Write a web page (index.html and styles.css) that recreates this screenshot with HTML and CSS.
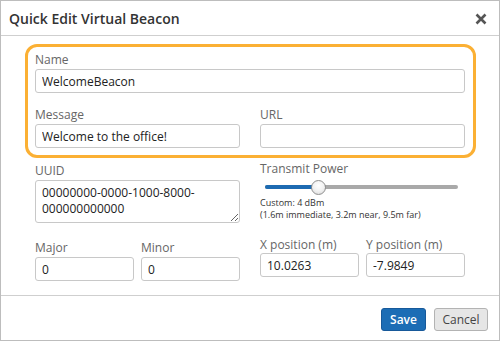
FILE: index.html
```html
<!DOCTYPE html>
<html>
<head>
<meta charset="utf-8">
<link rel="stylesheet" href="styles.css">
</head>
<body>
<div class="dialog">
  <div class="header">
    <div class="title">Quick Edit Virtual Beacon</div>
    <svg class="close" width="12" height="12" viewBox="0 0 12 12"><path d="M1.5 1.5 L10.5 10.5 M10.5 1.5 L1.5 10.5" stroke="#555" stroke-width="2.6" stroke-linecap="butt"/></svg>
  </div>
  <div class="body">
    <div class="highlight">
      <div class="field">
        <label class="label">Name</label>
        <input class="input" type="text" value="WelcomeBeacon">
      </div>
      <div class="row2">
        <div class="field">
          <label class="label">Message</label>
          <input class="input" type="text" value="Welcome to the office!">
        </div>
        <div class="field">
          <label class="label">URL</label>
          <input class="input" type="text" value="">
        </div>
      </div>
    </div>
    <div class="cols">
      <div class="col left">
        <label class="label">UUID</label>
        <textarea class="textarea">00000000-0000-1000-8000-000000000000</textarea>
        <div class="pair pair-left">
          <div class="field">
            <label class="label">Major</label>
            <input class="input small" type="text" value="0">
          </div>
          <div class="field">
            <label class="label">Minor</label>
            <input class="input small" type="text" value="0">
          </div>
        </div>
      </div>
      <div class="col right">
        <label class="label">Transmit Power</label>
        <div class="slider">
          <div class="track">
            <div class="fill"></div>
          </div>
          <div class="thumb"></div>
        </div>
        <div class="hint">Custom: 4 dBm<br>(1.6m immediate, 3.2m near, 9.5m far)</div>
        <div class="pair pair-right">
          <div class="field">
            <label class="label">X position (m)</label>
            <input class="input small" type="text" value="10.0263">
          </div>
          <div class="field">
            <label class="label">Y position (m)</label>
            <input class="input small" type="text" value="-7.9849">
          </div>
        </div>
      </div>
    </div>
  </div>
  <div class="footer">
    <button class="btn btn-primary">Save</button>
    <button class="btn btn-default">Cancel</button>
  </div>
</div>
</body>
</html>
```
FILE: styles.css
```css
* { box-sizing: border-box; }
html, body { margin: 0; padding: 0; background: #fff; }
body { font-family: "Open Sans", "Liberation Sans", sans-serif; color: #333; }

.dialog {
  width: 500px;
  height: 341px;
  border: 1px solid #bdbdbd;
  display: flex;
  flex-direction: column;
  background: #fff;
}

.header {
  height: 35px;
  border-bottom: 1px solid #cfcfcf;
  display: flex;
  align-items: center;
  justify-content: space-between;
  padding: 0 12px 0 8px;
  flex-shrink: 0;
}
.title {
  font-size: 14px;
  font-weight: 600;
  color: #333;
  margin-top: 1px;
}
.close { margin-top: 1px; }

.body {
  flex: 1;
  padding: 8px 23px 0 24px;
}

.highlight {
  border: 3px solid #fbb034;
  border-radius: 12px;
  padding: 5px 8px 7px 7px;
}

.field { display: flex; flex-direction: column; }

.label {
  display: block;
  font-size: 12px;
  line-height: 16px;
  color: #666;
  margin-bottom: 1px;
}

.input {
  height: 24px;
  border: 1px solid #c8c8c8;
  border-radius: 3px;
  padding: 0 6px;
  font-family: "Open Sans", "Liberation Sans", sans-serif;
  font-size: 12px;
  color: #222;
  background: #fff;
  width: 100%;
  outline: none;
}

.row2 {
  display: grid;
  grid-template-columns: 1fr 1fr;
  column-gap: 20px;
  margin-top: 14px;
}

.cols {
  display: grid;
  grid-template-columns: 205px 205px;
  column-gap: 20px;
  padding-left: 10px;
}

.col.left { padding-top: 5px; }
.col.right { padding-top: 3px; }

.textarea {
  display: block;
  width: 100%;
  height: 43px;
  border: 1px solid #c8c8c8;
  border-radius: 3px;
  padding: 4px 6px;
  font-family: "Open Sans", "Liberation Sans", sans-serif;
  font-size: 12px;
  line-height: 16px;
  color: #222;
  overflow: hidden;
  outline: none;
  margin: 0;
}

.pair {
  display: grid;
  grid-template-columns: 1fr 1fr;
  column-gap: 7px;
}
.pair-left { margin-top: 17px; }
.pair-right { margin-top: 16px; }
.pair-right .label { margin-bottom: 0; }
.small { height: 24px; }

.slider {
  position: relative;
  height: 19px;
  margin: 0 7px 0 5px;
}
.track {
  position: absolute;
  left: 0;
  right: 0;
  top: 7px;
  height: 4px;
  background: #a9a9a9;
  border-radius: 2px;
  overflow: hidden;
}
.fill {
  width: 53px;
  height: 100%;
  background: #1d6bb2;
}
.thumb {
  position: absolute;
  left: 46px;
  top: 2px;
  width: 15px;
  height: 15px;
  border-radius: 50%;
  border: 1px solid #8f8f8f;
  background: radial-gradient(circle at 50% 35%, #ffffff 0%, #f2f2f2 50%, #d6d6d6 100%);
}

.hint {
  font-size: 9px;
  line-height: 12px;
  color: #333;
}

.footer {
  height: 45px;
  border-top: 1px solid #cfcfcf;
  display: flex;
  justify-content: flex-end;
  align-items: flex-start;
  gap: 8px;
  padding: 12px 11px 0 0;
  flex-shrink: 0;
}

.btn {
  height: 23px;
  border-radius: 3px;
  font-family: "Open Sans", "Liberation Sans", sans-serif;
  font-size: 12px;
  padding: 0;
  cursor: pointer;
}
.btn-primary {
  width: 45px;
  background: #1c6db5;
  border: 1px solid #17599a;
  color: #fff;
  font-weight: 600;
}
.btn-default {
  width: 54px;
  background: #e6e6e6;
  border: 1px solid #b3b3b3;
  color: #444;
}
```
